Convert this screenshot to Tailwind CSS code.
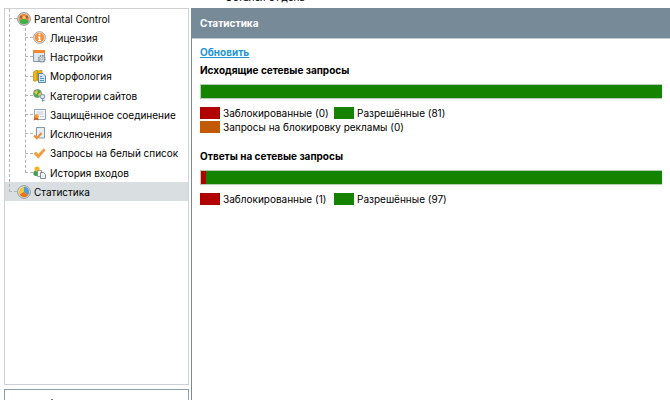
<!DOCTYPE html>
<html lang="ru">
	<head>
		<meta charset="utf-8" />
		<meta name="viewport" content="width=device-width, initial-scale=1" />
		<title>Parental Control — Статистика</title>
		<script src="https://cdn.jsdelivr.net/npm/@tailwindcss/browser@4"></script>
	</head>

	<body class="h-screen overflow-hidden bg-white font-[Inter,'Liberation_Sans',sans-serif] text-[10px] leading-[14px] text-black">
		<div class="flex h-full flex-col">
			<!-- нижний край строки лицензии -->
			<div class="flex h-2 shrink-0 items-end overflow-hidden pb-1 pl-[225px]">
				<p>Остался 31 день</p>
			</div>

			<div class="flex min-h-0 flex-1">
				<aside class="flex w-[189px] shrink-0 flex-col gap-1 pl-1">
					<nav class="min-h-0 flex-1 border border-[#cfd1d2]" aria-label="Меню">
						<ul class="flex flex-col">
							<li class="relative">
								<!-- линия дерева до последнего пункта -->
								<span class="absolute top-0 bottom-[-10px] left-1 border-l border-dashed border-[#b4b4b4]"></span>
								<a href="#" class="flex h-[19px] items-center pl-1">
									<span class="w-2 border-t border-dashed border-[#b4b4b4]"></span>
									<svg class="mr-[3px] size-[14px]" viewBox="0 0 14 14">
										<circle cx="7" cy="7" r="6.3" fill="#e6e6e2" stroke="#87888a" />
										<circle cx="7" cy="7" r="5.2" fill="#f28a36" />
										<circle cx="4.5" cy="5" r="1.6" fill="#a9592b" />
										<circle cx="9.5" cy="5" r="1.6" fill="#a9592b" />
										<circle cx="7" cy="5.500" r="1.8" fill="#f4c467" />
										<path d="M2.500 10c0-4 9-4 9 0-2 2.800-7 2.800-9 0z" fill="#39b34a" />
									</svg>
									Parental Control
								</a>
								<ul class="relative pl-5">
									<li class="absolute top-0 bottom-[9px] left-5 border-l border-dashed border-[#b4b4b4]"></li>
									<li>
										<a href="#" class="flex h-[19px] items-center">
											<span class="w-2 border-t border-dashed border-[#b4b4b4]"></span>
											<svg class="mr-1 size-[13px]" viewBox="0 0 13 13">
												<circle cx="6.5" cy="6.5" r="5.9" fill="#e9e4e0" stroke="#a9a0a0" stroke-width=".9" />
												<circle cx="6.5" cy="6.5" r="4.8" fill="#f39240" />
												<circle cx="6.5" cy="3.6" r="1" fill="#fff" />
												<path d="M5 5.500h2.300V9H8v1H5V9h.700V6.500H5z" fill="#fff" />
											</svg>
											Лицензия
										</a>
									</li>
									<li>
										<a href="#" class="flex h-[19px] items-center">
											<span class="w-2 border-t border-dashed border-[#b4b4b4]"></span>
											<svg class="mr-1 size-[13px]" viewBox="0 0 13 13">
												<path d="M.5 1.500h11v10H.5z" fill="#dfe7ef" stroke="#8194a6" />
												<path d="M0 0h12v3H0z" fill="#f28932" />
												<circle cx="8.8" cy="8.8" r="3.100" fill="#e4e9ee" stroke="#7d8c9b" stroke-width="1.500" stroke-dasharray="1.700 .7" />
												<circle cx="8.8" cy="8.8" r="1.200" fill="#fff" stroke="#7d8c9b" stroke-width=".7" />
											</svg>
											Настройки
										</a>
									</li>
									<li>
										<a href="#" class="flex h-5 items-center">
											<span class="w-2 border-t border-dashed border-[#b4b4b4]"></span>
											<svg class="mr-1 size-[13px]" viewBox="0 0 13 13">
												<path d="M.5 2 3 .5h2V10l-2 1H.5zM4 2 6.500.5H9V10H4z" fill="#f0b716" stroke="#b88b15" stroke-width=".7" />
												<path d="M5.500 3.500h4.500l2.500 2.500v6.500h-7z" fill="#d4e7f8" stroke="#4b78a3" stroke-width=".9" />
												<path d="M7 6.500h2M7 8.500h4M7 10.500h4" stroke="#397dba" stroke-width=".8" />
											</svg>
											Морфология
										</a>
									</li>
									<li>
										<a href="#" class="flex h-[19px] items-center">
											<span class="w-2 border-t border-dashed border-[#b4b4b4]"></span>
											<svg class="mr-1 size-[13px]" viewBox="0 0 13 13">
												<circle cx="4.500" cy="4.500" r="4" fill="#42ad48" stroke="#688b87" stroke-width=".7" />
												<path d="M1 3 4 1l1 2-2 3zM5 5l3-2v3L6 8z" fill="#f2bd49" />
												<circle cx="9.500" cy="7.500" r="2.200" fill="#dfeaf3" stroke="#8ba4ba" stroke-width="1.200" />
												<path d="M9.500 9.500v3M9.500 11.500h2" stroke="#8199ae" stroke-width="1.300" />
											</svg>
											Категории сайтов
										</a>
									</li>
									<li>
										<a href="#" class="flex h-[19px] items-center">
											<span class="w-2 border-t border-dashed border-[#b4b4b4]"></span>
											<svg class="mr-1 size-[13px]" viewBox="0 0 13 13">
												<path d="M1.500 1.500h11v10h-11z" fill="#f5f7f8" stroke="#91a5b4" />
												<path d="M4 4h6M3.500 6h7M7 8.500h4" stroke="#b3c0ca" stroke-width=".8" />
												<path d="m2 8-1.500 4.500 2.500-1 2.500 1L5 8z" fill="#d05d18" />
												<circle cx="3.500" cy="8.300" r="2.100" fill="#f09a2c" />
											</svg>
											Защищённое соединение
										</a>
									</li>
									<li>
										<a href="#" class="flex h-[19px] items-center">
											<span class="w-2 border-t border-dashed border-[#b4b4b4]"></span>
											<svg class="mr-1 size-[13px]" viewBox="0 0 13 13">
												<path d="M3.500.5h8v10.500h-6l-2-2z" fill="#e8eef4" stroke="#8598aa" />
												<path d="m1 8.500 2.800 2.800L8.500 6" fill="none" stroke="#f0892b" stroke-width="2" />
											</svg>
											Исключения
										</a>
									</li>
									<li>
										<a href="#" class="flex h-5 items-center">
											<span class="w-2 border-t border-dashed border-[#b4b4b4]"></span>
											<svg class="mr-1 size-[13px]" viewBox="0 0 13 13">
												<path d="m1 6.500 2-1.500 2.200 2.500L10.700 1.700 12.300 3 5.300 11.300z" fill="#f2a03a" stroke="#e88720" stroke-width=".6" />
											</svg>
											Запросы на белый список
										</a>
									</li>
									<li>
										<a href="#" class="flex h-[19px] items-center">
											<span class="w-2 border-t border-dashed border-[#b4b4b4]"></span>
											<svg class="mr-1 size-[13px]" viewBox="0 0 13 13">
												<path d="M.5 9V6c1-2 6-2 7 0v4h-5z" fill="#36a344" />
												<circle cx="4" cy="3" r="2.600" fill="#f3b51b" />
												<path d="M4.500 4.500h4v6h-4z" fill="#fff" stroke="#7c8994" stroke-width=".8" />
												<path d="M7.500 6.500h3l2 2v4h-5z" fill="#edf1f4" stroke="#75838f" stroke-width=".9" />
											</svg>
											История входов
										</a>
									</li>
								</ul>
							</li>
							<li>
								<a href="#" class="flex h-[19px] items-center bg-[#d9dee1] pl-1" aria-current="page">
									<span class="w-2 border-t border-dashed border-[#b4b4b4]"></span>
									<svg class="mr-[3px] size-[14px]" viewBox="0 0 14 14">
										<circle cx="7" cy="7" r="6.300" fill="#eef2f5" stroke="#8492a3" />
										<circle cx="7" cy="7" r="5.200" fill="#f8c43a" />
										<path d="M7 7V1.800A5.200 5.200 0 0 1 11 10.300z" fill="#4c9fdb" />
										<path d="m7 7 4 3.300a5.200 5.200 0 0 1-8.500-.7z" fill="#ea7426" />
									</svg>
									Статистика
								</a>
							</li>
						</ul>
					</nav>
					<div class="h-[11px] shrink-0 overflow-hidden border border-b-0 border-[#8d9daa] pt-[9px] pl-[46px]">
						<span class="block h-px w-[2px] bg-[#777]"></span>
					</div>
				</aside>

				<main class="ml-[2px] flex-1 border-l border-[#778a98]">
					<h1 class="border-b border-[#c3cbd1] bg-[#778a98] px-2 py-2 font-bold text-white">Статистика</h1>
					<div class="px-2 pt-[6px]">
						<a href="#" class="font-bold text-[#1e96d2] underline">Обновить</a>

						<section class="pt-1">
							<h2 class="font-bold">Исходящие сетевые запросы</h2>
							<div class="mt-[7px] flex h-[15px] border-y border-l border-[#b7cdb3] bg-[#148400] shadow-xs"></div>
							<ul class="mt-[7px] flex flex-wrap gap-x-1">
								<li class="flex w-[130px] items-center gap-[3px]"><span class="h-3 w-5 bg-[#b00000]"></span>Заблокированные (0)</li>
								<li class="flex items-center gap-[3px]"><span class="h-3 w-5 bg-[#148400]"></span>Разрешённые (81)</li>
								<li class="flex w-full items-center gap-[3px]"><span class="h-3 w-5 bg-[#c25a05]"></span>Запросы на блокировку рекламы (0)</li>
							</ul>
						</section>

						<section class="pt-[15px]">
							<h2 class="font-bold">Ответы на сетевые запросы</h2>
							<div class="mt-[7px] flex h-[15px] border-y border-l border-[#b7cdb3] bg-[#148400] shadow-xs">
								<span class="bg-[#b00000]" style="width: 1.1%"></span>
							</div>
							<ul class="mt-[7px] flex flex-wrap gap-x-1">
								<li class="flex w-[130px] items-center gap-[3px]"><span class="h-3 w-5 bg-[#b00000]"></span>Заблокированные (1)</li>
								<li class="flex items-center gap-[3px]"><span class="h-3 w-5 bg-[#148400]"></span>Разрешённые (97)</li>
							</ul>
						</section>
					</div>
				</main>
			</div>
		</div>
	</body>
</html>
